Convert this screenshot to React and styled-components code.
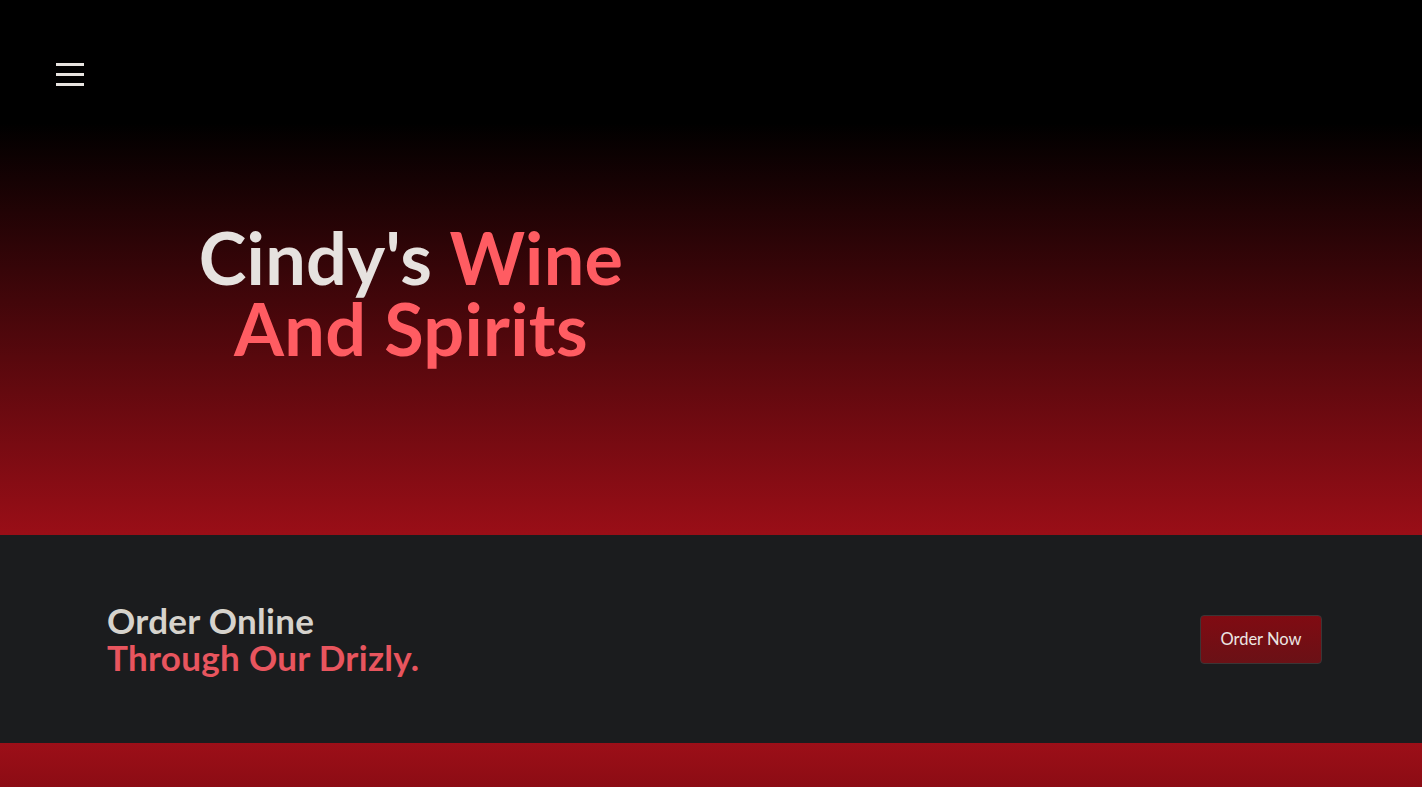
import React from 'react'
import styled, { createGlobalStyle } from 'styled-components'

const GlobalStyle = createGlobalStyle`
  * { box-sizing: border-box; }
  body {
    margin: 0;
    background: #000;
    font-family: 'Lato', 'Open Sans', sans-serif;
  }
`

const Hero = styled.header`
  height: 535px;
  display: flex;
  flex-direction: column;
  background: linear-gradient(to bottom, #000 0%, #000 23%, #9a0e17 100%);
`

const Nav = styled.nav`
  height: 150px;
  padding: 63px 0 0 56px;
`

const Burger = styled.button`
  width: 28px;
  height: 23px;
  padding: 0;
  border: none;
  background: none;
  display: flex;
  flex-direction: column;
  justify-content: space-between;
  cursor: pointer;

  span {
    display: block;
    height: 3px;
    width: 100%;
    background: #e8e4e0;
  }
`

const Title = styled.h1`
  margin: 72px 0 0 111px;
  width: 600px;
  text-align: center;
  font-size: 72px;
  line-height: 71px;
  font-weight: 700;
  letter-spacing: 0.3px;
  color: #ff5c62;
`

const Light = styled.span`
  color: #e6e2df;
`

const Band = styled.section`
  height: 208px;
  background: #1b1c1e;
  display: flex;
  align-items: center;
  justify-content: space-between;
  padding: 0 100px 0 107px;
`

const Pitch = styled.h2`
  margin: 0;
  font-size: 35px;
  line-height: 37px;
  font-weight: 700;
  letter-spacing: 0.3px;
  color: ${props => props.accent ? '#e8555e' : '#d6d3cd'};
`

const OrderButton = styled.button`
  width: 122px;
  height: 49px;
  border-radius: 4px;
  border: 1px solid #3b3536;
  background: linear-gradient(to bottom, #800b12, #6a1116);
  color: #ece6e3;
  font-family: 'Lato', sans-serif;
  font-size: 16.5px;
  cursor: pointer;
`

const Next = styled.section`
  height: 44px;
  background: linear-gradient(to bottom, #9c0f18 0%, #8c0c14 100%);
`

export default function App() {
  return (
    <>
      <GlobalStyle />
      <Hero>
        <Nav>
          <Burger aria-label="menu">
            <span />
            <span />
            <span />
          </Burger>
        </Nav>
        <Title>
          <Light>Cindy's </Light>Wine<br />And Spirits
        </Title>
      </Hero>
      <Band>
        <div>
          <Pitch>Order Online</Pitch>
          <Pitch accent>Through Our Drizly.</Pitch>
        </div>
        <OrderButton>Order Now</OrderButton>
      </Band>
      <Next />
    </>
  )
}
